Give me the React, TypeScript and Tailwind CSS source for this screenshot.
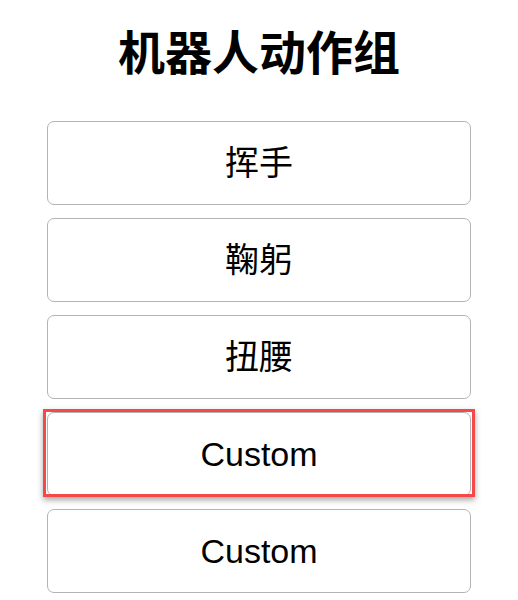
import { useState } from 'react';

const actions = ['挥手', '鞠躬', '扭腰', 'Custom', 'Custom'];

const App = () => {
  const [selected, setSelected] = useState(3);

  return (
    <div className="min-h-screen bg-white font-['Liberation_Sans','Noto_Sans_CJK_SC',sans-serif] text-black">
      <div className="mx-auto w-[424px] pt-[30px]">
        <h1 className="text-center text-[47px] font-bold leading-[47px]">机器人动作组</h1>

        <div className="mt-[44px] flex flex-col gap-[13px]">
          {actions.map((label, i) => (
            <div key={i} className="relative">
              <button
                onClick={() => setSelected(i)}
                className="flex h-[84px] w-full items-center justify-center rounded-[7px] border border-[#b3b3b3] bg-white text-[34px] font-normal"
              >
                {label}
              </button>
              {/* selection frame */}
              {selected === i && (
                <div className="pointer-events-none absolute -inset-x-[4px] -top-[3px] -bottom-[1px] border-[3px] border-[#f54848] shadow-[0_3px_6px_rgba(0,0,0,0.35)]" />
              )}
            </div>
          ))}
        </div>
      </div>
    </div>
  );
};

export default App;
